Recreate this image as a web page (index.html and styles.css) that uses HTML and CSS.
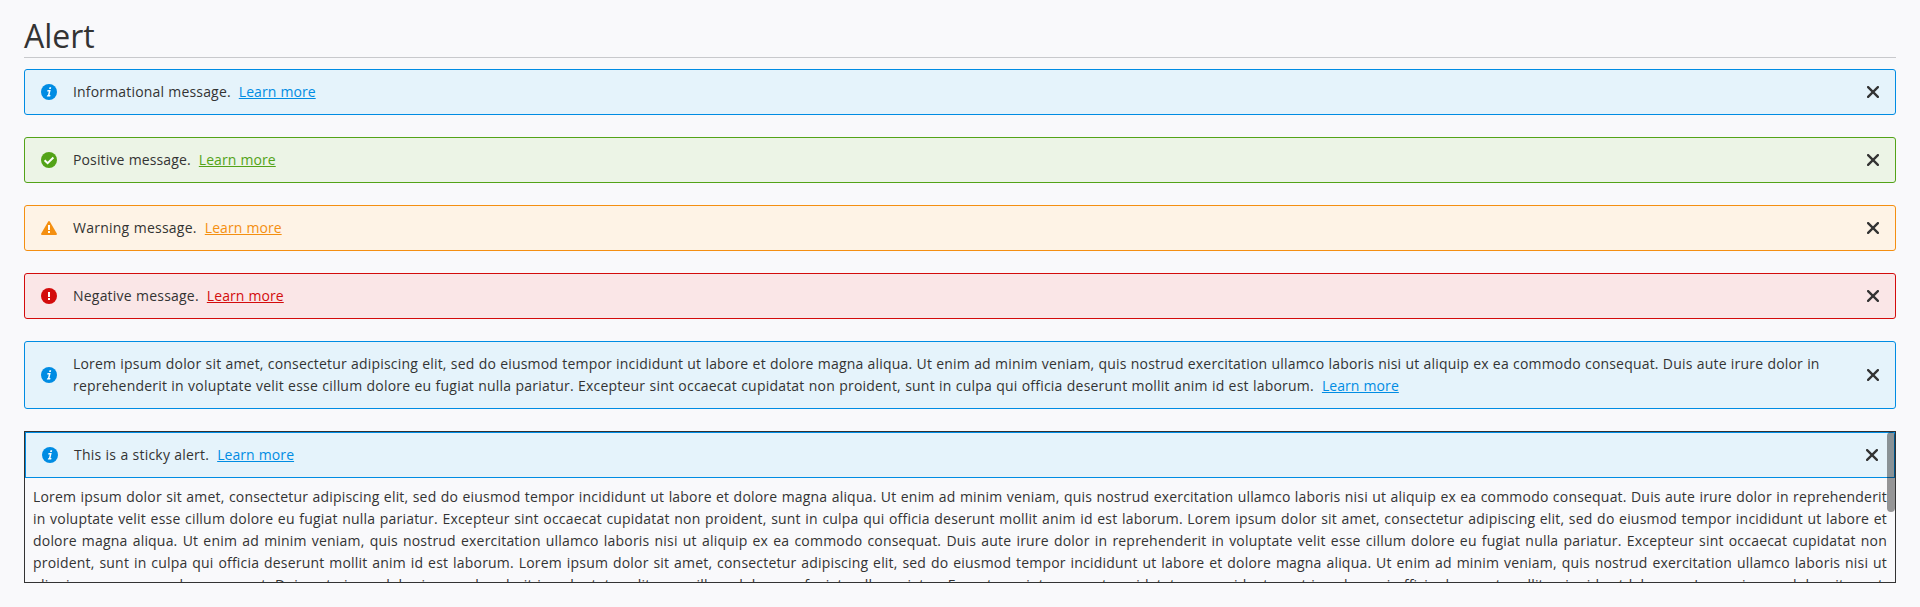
FILE: index.html
```html
<!DOCTYPE html>
<html lang="en">
<head>
<meta charset="utf-8">
<title>Alert</title>
<link rel="stylesheet" href="styles.css">
</head>
<body>
<svg class="defs" aria-hidden="true">
  <symbol id="info" viewBox="0 0 16 16"><circle cx="8" cy="8" r="8" fill="currentColor"/><path d="M8.5 3.2h1.7l-.4 1.7H8.1zM6.5 6.1h3.2l-1.2 5h1l-.3 1.4H5.8l.3-1.3h.8l.9-3.8H6.2z" fill="#fff"/></symbol>
  <symbol id="positive" viewBox="0 0 16 16"><circle cx="8" cy="8" r="8" fill="currentColor"/><path d="M3.6 8.2l3 2.9 5.8-5.6" fill="none" stroke="#fff" stroke-width="2"/></symbol>
  <symbol id="warning" viewBox="0 0 16 16"><path d="M7.2 1.4Q8 .5 8.8 1.4L15.8 13.6Q16.2 15 15 15H1Q-.2 15 .2 13.6z" fill="currentColor"/><path d="M7 5h2v5H7zM7 11h2v2H7z" fill="#fff"/></symbol>
  <symbol id="negative" viewBox="0 0 16 16"><circle cx="8" cy="8" r="8" fill="currentColor"/><path d="M7 4h2v5H7zM7 10h2v2H7z" fill="#fff"/></symbol>
  <symbol id="close" viewBox="0 0 12 12"><path d="M1.1 1.1l9.8 9.8M10.9 1.1l-9.8 9.8" fill="none" stroke="currentColor" stroke-width="2.3" stroke-linecap="round"/></symbol>
</svg>
<main class="page">
  <h1 class="title">Alert</h1>
  <div class="alerts">
    <div class="alert alert-info">
      <svg class="icon"><use href="#info"/></svg>
      <p class="message">Informational message.<a class="link" href="#">Learn more</a></p>
      <button class="close" aria-label="Close"><svg class="cross"><use href="#close"/></svg></button>
    </div>
    <div class="alert alert-positive">
      <svg class="icon"><use href="#positive"/></svg>
      <p class="message">Positive message.<a class="link" href="#">Learn more</a></p>
      <button class="close" aria-label="Close"><svg class="cross"><use href="#close"/></svg></button>
    </div>
    <div class="alert alert-warning">
      <svg class="icon"><use href="#warning"/></svg>
      <p class="message">Warning message.<a class="link" href="#">Learn more</a></p>
      <button class="close" aria-label="Close"><svg class="cross"><use href="#close"/></svg></button>
    </div>
    <div class="alert alert-negative">
      <svg class="icon"><use href="#negative"/></svg>
      <p class="message">Negative message.<a class="link" href="#">Learn more</a></p>
      <button class="close" aria-label="Close"><svg class="cross"><use href="#close"/></svg></button>
    </div>
    <div class="alert alert-info alert-long">
      <svg class="icon"><use href="#info"/></svg>
      <p class="message">Lorem ipsum dolor sit amet, consectetur adipiscing elit, sed do eiusmod tempor incididunt ut labore et dolore magna aliqua. Ut enim ad minim veniam, quis nostrud exercitation ullamco laboris nisi ut aliquip ex ea commodo consequat. Duis aute irure dolor in reprehenderit in voluptate velit esse cillum dolore eu fugiat nulla pariatur. Excepteur sint occaecat cupidatat non proident, sunt in culpa qui officia deserunt mollit anim id est laborum.<a class="link" href="#">Learn more</a></p>
      <button class="close" aria-label="Close"><svg class="cross"><use href="#close"/></svg></button>
    </div>
    <div class="scroller">
      <div class="alert alert-info alert-sticky">
        <svg class="icon"><use href="#info"/></svg>
        <p class="message">This is a sticky alert.<a class="link" href="#">Learn more</a></p>
        <button class="close" aria-label="Close"><svg class="cross"><use href="#close"/></svg></button>
      </div>
      <p class="content">Lorem ipsum dolor sit amet, consectetur adipiscing elit, sed do eiusmod tempor incididunt ut labore et dolore magna aliqua. Ut enim ad minim veniam, quis nostrud exercitation ullamco laboris nisi ut aliquip ex ea commodo consequat. Duis aute irure dolor in reprehenderit in voluptate velit esse cillum dolore eu fugiat nulla pariatur. Excepteur sint occaecat cupidatat non proident, sunt in culpa qui officia deserunt mollit anim id est laborum. Lorem ipsum dolor sit amet, consectetur adipiscing elit, sed do eiusmod tempor incididunt ut labore et dolore magna aliqua. Ut enim ad minim veniam, quis nostrud exercitation ullamco laboris nisi ut aliquip ex ea commodo consequat. Duis aute irure dolor in reprehenderit in voluptate velit esse cillum dolore eu fugiat nulla pariatur. Excepteur sint occaecat cupidatat non proident, sunt in culpa qui officia deserunt mollit anim id est laborum. Lorem ipsum dolor sit amet, consectetur adipiscing elit, sed do eiusmod tempor incididunt ut labore et dolore magna aliqua. Ut enim ad minim veniam, quis nostrud exercitation ullamco laboris nisi ut aliquip ex ea commodo consequat. Duis aute irure dolor in reprehenderit in voluptate velit esse cillum dolore eu fugiat nulla pariatur. Excepteur sint occaecat cupidatat non proident, sunt in culpa qui officia deserunt mollit anim id est laborum. Lorem ipsum dolor sit amet, consectetur adipiscing elit, sed do eiusmod tempor incididunt ut labore et dolore magna aliqua.</p>
      <div class="thumb"></div>
    </div>
  </div>
</main>
</body>
</html>
```
FILE: styles.css
```css
* { box-sizing: border-box; }
body {
  margin: 0;
  background: #f9f9fb;
  color: #333;
  font: 14px/22px "Open Sans", sans-serif;
  overflow: hidden;
}
.defs { position: absolute; width: 0; height: 0; }
.page { padding: 12px 24px 24px; }
.title {
  margin: 0 0 11px;
  height: 46px;
  border-bottom: 1px solid #c8c9cc;
  font-size: 32px;
  font-weight: 400;
  line-height: 48px;
}
.alerts { display: flex; flex-direction: column; gap: 22px; word-spacing: .36px; }
.alert {
  display: flex;
  align-items: center;
  padding: 11px 16px;
  border: 1px solid currentColor;
  border-radius: 3px;
}
.alert-info { color: #008ce3; background: #e5f3fb; letter-spacing: .17px; }
.alert-positive { color: #53a318; background: #ecf4e6; letter-spacing: .135px; }
.alert-warning { color: #f48f11; background: #fef3e6; letter-spacing: .245px; }
.alert-negative { color: #d30c0c; background: #fae6e7; letter-spacing: .21px; }
.alert-long { letter-spacing: .21px; }
.alert-long .message::first-line { letter-spacing: .184px; }
.alert-sticky { border-radius: 0; letter-spacing: .21px; }
.icon { flex: none; width: 16px; height: 16px; margin-right: 16px; }
.message { flex: 1; margin: 0; color: #333; }
.link { margin-left: 8px; text-decoration: underline; letter-spacing: .07px; }
.alert-info .link { color: #008ce3; }
.alert-positive .link { color: #53a318; }
.alert-warning .link { color: #f48f11; }
.alert-negative .link { color: #d30c0c; }
.close {
  flex: none;
  display: flex;
  margin-left: 16px;
  padding: 0;
  border: 0;
  background: none;
  color: #333;
}
.cross { width: 12px; height: 12px; }
.scroller {
  position: relative;
  height: 152px;
  border: 1px solid #333;
  overflow: hidden;
}
.content { margin: 0; padding: 8px; text-align: justify; letter-spacing: .195px; }
.thumb {
  position: absolute;
  top: 0;
  right: 0;
  width: 8px;
  height: 80px;
  border-radius: 4px;
  background: rgba(0, 0, 0, .4);
}
```
